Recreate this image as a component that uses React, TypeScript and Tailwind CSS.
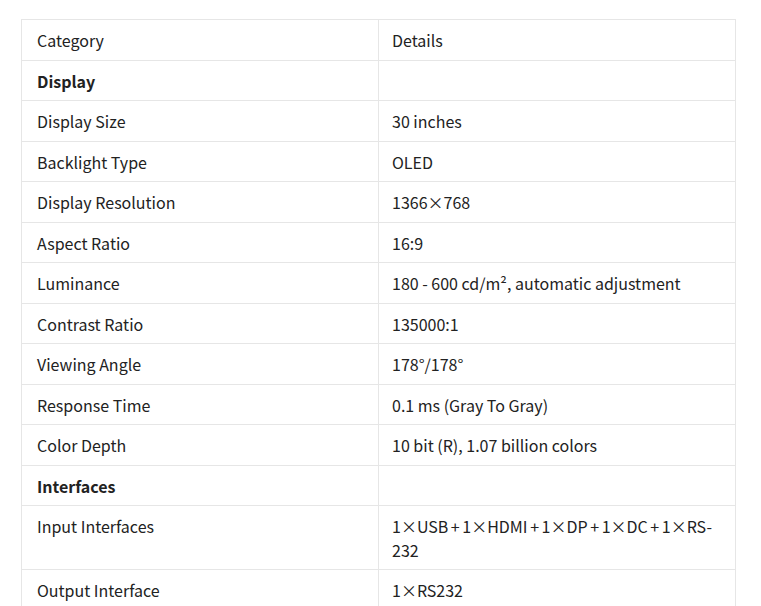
import React from 'react';

const rows: { label: string; value?: string; section?: boolean; tight?: boolean }[] = [
  { label: 'Display', section: true },
  { label: 'Display Size', value: '30 inches' },
  { label: 'Backlight Type', value: 'OLED' },
  { label: 'Display Resolution', value: '1366×768' },
  { label: 'Aspect Ratio', value: '16:9' },
  { label: 'Luminance', value: '180 - 600 cd/m², automatic adjustment' },
  { label: 'Contrast Ratio', value: '135000:1' },
  { label: 'Viewing Angle', value: '178°/178°' },
  { label: 'Response Time', value: '0.1 ms (Gray To Gray)' },
  { label: 'Color Depth', value: '10 bit (R), 1.07 billion colors' },
  { label: 'Interfaces', section: true },
  { label: 'Input Interfaces', value: '1×USB + 1×HDMI + 1×DP + 1×DC + 1×RS-232', tight: true },
  { label: 'Output Interface', value: '1×RS232' },
];

const cell = 'border border-[#e6e6e6] pt-[9px] pb-[7px] align-top text-left';

const App = () => {
  return (
    <div className="min-h-screen bg-white pt-[19px] pl-[21px] font-['Noto_Sans_CJK_SC','Noto_Sans',sans-serif] text-base leading-[23.5px] text-[#222]">
      <table className="w-[715px] table-fixed border-collapse">
        <thead>
          <tr>
            <th className={`${cell} pl-[15px] pr-[15px] font-normal`}>Category</th>
            <th className={`${cell} pl-[13px] pr-[12px] font-normal`}>Details</th>
          </tr>
        </thead>
        <tbody>
          {rows.map((r) => (
            <tr key={r.label}>
              <td className={`${cell} pl-[15px] pr-[15px] ${r.section ? 'font-bold' : ''}`}>{r.label}</td>
              <td className={`${cell} pl-[13px] pr-[12px] ${r.tight ? '[word-spacing:-1px]' : ''}`}>{r.value ?? ''}</td>
            </tr>
          ))}
        </tbody>
      </table>
    </div>
  );
};

export default App;
